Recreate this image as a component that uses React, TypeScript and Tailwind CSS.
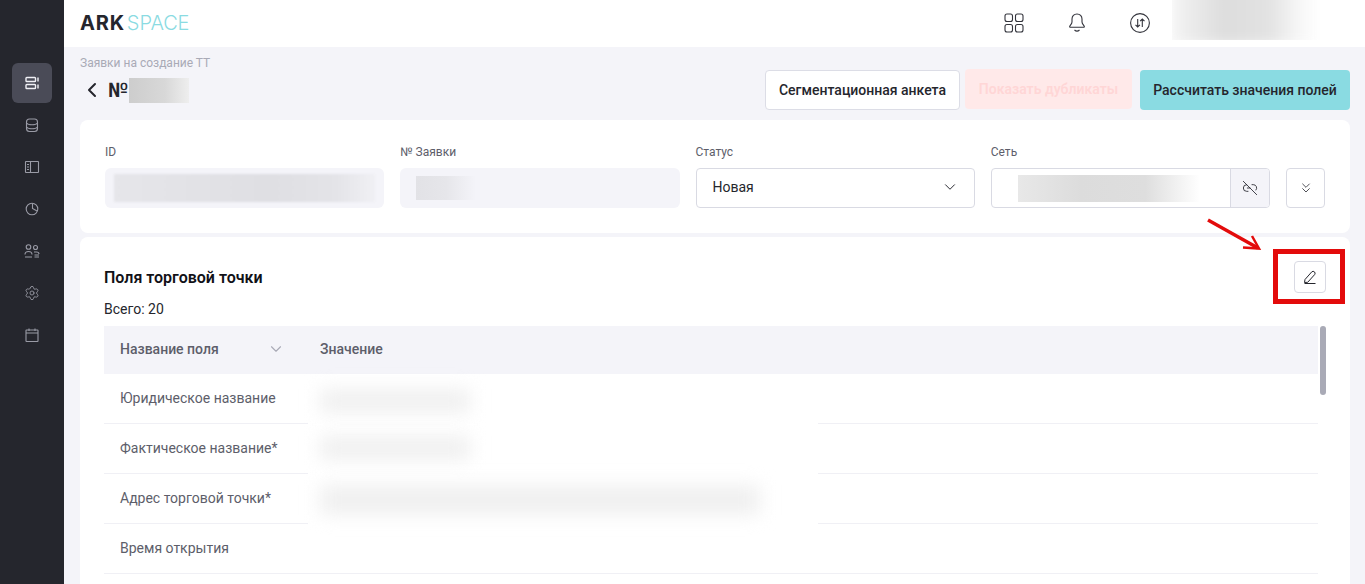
import React from "react";
import { ChevronDown, ChevronLeft, ChevronsDown, Link2Off, Settings } from "lucide-react";

const rows = [
  { name: "Юридическое название" },
  { name: "Фактическое название*" },
  { name: "Адрес торговой точки*" },
  { name: "Время открытия" },
];

function SideIcon({ children, active }: { children: React.ReactNode; active?: boolean }) {
  return (
    <div className={active ? "flex h-10 w-10 items-center justify-center rounded-md bg-[#4a4b57] text-[#f0f0f5]" : "flex h-10 w-10 items-center justify-center rounded-md text-[#9a9ba6]"}>
      <svg width="16" height="16" viewBox="0 0 16 16" fill="none" stroke="currentColor" strokeWidth={active ? 1.4 : 1.1}>
        {children}
      </svg>
    </div>
  );
}

function Sidebar() {
  return (
    <aside className="flex w-16 shrink-0 flex-col items-center gap-[2px] bg-[#25262d] pt-[63px]">
      <SideIcon active>
        <rect x="2" y="2.500" width="9.500" height="4" rx="0.8" />
        <rect x="2" y="9.500" width="9.500" height="4" rx="0.8" />
        <path d="M14 2.500v4M14 9.500v4" />
      </SideIcon>
      <SideIcon>
        <rect x="2.500" y="2" width="11" height="12.500" rx="3" />
        <path d="M2.500 6c1 1.300 3 1.800 5.500 1.800s4.500-.5 5.500-1.800" />
        <path d="M2.500 10c1 1.300 3 1.800 5.500 1.800s4.500-.5 5.500-1.800" />
      </SideIcon>
      <SideIcon>
        <rect x="1.500" y="2.500" width="13" height="11" rx="0.5" />
        <path d="M6.500 2.500v11M3 5.500h2M3 8h2M3 10.500h2" />
      </SideIcon>
      <SideIcon>
        <circle cx="8" cy="8" r="5.800" />
        <path d="M8.500 2.500V7.500L13 10" />
      </SideIcon>
      <SideIcon>
        <circle cx="4.500" cy="4" r="2.300" />
        <circle cx="11.500" cy="4.500" r="2" />
        <path d="M1 11.500c0-2 1.500-3 3.500-3s3.500 1 3.500 3M1 14h7M10 9h2.500c1.500 0 2.500.8 2.500 2M10.500 12h4.500M10.500 14h4.500" />
      </SideIcon>
      <div className="flex h-10 w-10 items-center justify-center text-[#9a9ba6]">
        <Settings size={16} strokeWidth={1.300} />
      </div>
      <SideIcon>
        <rect x="2" y="3" width="12" height="11.500" rx="0.5" />
        <path d="M2 6h12M5 1.500V4M11 1.500V4" />
      </SideIcon>
    </aside>
  );
}

function Header() {
  return (
    <header className="relative flex h-[47px] shrink-0 items-center bg-white pb-[2px] pl-4">
      <div className="flex items-baseline font-['Inter',sans-serif] text-[20px] leading-none">
        <span className="font-bold tracking-[0.8px] text-[#25262d]">ARK</span>
        <span className="ml-[2px] font-light tracking-[-0.1px] text-[#8adbe2]">SPACE</span>
      </div>
      <div className="ml-auto mr-[45px] flex items-center">
        <div className="flex w-[63px] justify-center text-[#33343c]">
          <svg width="20" height="20" viewBox="0 0 20 20" fill="none" stroke="currentColor" strokeWidth="1.100">
            <rect x="1" y="1" width="7.500" height="7.500" rx="2" />
            <rect x="11.500" y="1" width="7.500" height="7.500" rx="2" />
            <rect x="1" y="11.500" width="7.500" height="7.500" rx="2" />
            <rect x="11.500" y="11.500" width="7.500" height="7.500" rx="2" />
          </svg>
        </div>
        <div className="flex w-[63px] justify-center text-[#33343c]">
          <svg width="20" height="20" viewBox="0 0 20 20" fill="none" stroke="currentColor" strokeWidth="1.100">
            <path d="M10 1c-3 0-5 2.300-5 5v3c0 1.500-1.300 2.800-2.200 4 -.4.600 0 1.300.7 1.300h13c.7 0 1.100-.7.700-1.300-.9-1.200-2.200-2.500-2.200-4V6c0-2.700-2-5-5-5z" />
            <path d="M7.500 17c1.500 1.300 3.500 1.300 5 0" />
          </svg>
        </div>
        <div className="flex w-[63px] justify-center text-[#33343c]">
          <svg width="20" height="20" viewBox="0 0 20 20" fill="none" stroke="currentColor" strokeWidth="1.100">
            <circle cx="10" cy="10" r="9.400" />
            <path d="M7.700 6v8M5.500 11.800 7.700 14l2.200-2.200M12.300 14V6M10.100 8.200 12.300 6l2.200 2.200" />
          </svg>
        </div>
        <div className="ml-[1px] h-[40px] w-[148px] -translate-y-[3px] overflow-hidden">
          <div className="-mt-4 h-[60px] w-full bg-[linear-gradient(90deg,#f4f4f4,#dddddd_35%,#e2e2e2_65%,#f6f6f6_85%,#ffffff)] blur-[6px]" />
        </div>
      </div>
    </header>
  );
}

function TitleRow() {
  return (
    <div className="flex h-[73px] shrink-0 pl-4 pr-[15px]">
      <div className="flex flex-col">
        <div className="mt-[9px] text-xs leading-[14px] text-[#a9aab6]">Заявки на создание ТТ</div>
        <div className="mt-[7px] flex items-center text-[#25262d]">
          <ChevronLeft size={24} strokeWidth={2} />
          <span className="ml-1 text-[20px] font-semibold leading-[26px]">№</span>
          <div className="ml-[1px] h-[25px] w-[60px] bg-[linear-gradient(90deg,#cdcdcd,#d8d8d8_60%,#eeeeee)]" />
        </div>
      </div>
      <div className="ml-auto mt-[23px] flex h-10 items-center">
        <button className="h-10 w-[195px] rounded border border-[#dcdde6] bg-white text-sm font-medium text-[#25262d]">Сегментационная анкета</button>
        <button className="ml-[5px] h-10 w-[167px] -translate-y-px rounded bg-[#ffe9e9] text-sm font-semibold text-[#ffd6d6]">Показать дубликаты</button>
        <button className="ml-2 h-10 w-[210px] rounded bg-[#8adbe2] text-sm font-medium text-[#25262d]">Рассчитать значения полей</button>
      </div>
    </div>
  );
}

function Field({ label, children }: { label: string; children: React.ReactNode }) {
  return (
    <div className="min-w-0 flex-1">
      <div className="mb-2 text-xs leading-4 text-[#5d5e6a]">{label}</div>
      {children}
    </div>
  );
}

function InfoCard() {
  return (
    <section className="ml-4 mr-[15px] flex shrink-0 items-end gap-4 rounded-lg bg-white px-[25px] pb-[25px] pt-6">
      <Field label="ID">
        <div className="flex h-10 items-center rounded-md bg-[#f4f4f9] px-[9px]">
          <div className="h-7 w-full bg-[linear-gradient(90deg,#e6e6ea,#dfdfe3_60%,#e4e4e8_85%,#f0f0f4)] blur-[1px]" />
        </div>
      </Field>
      <Field label="№ Заявки">
        <div className="flex h-10 items-center rounded-md bg-[#f4f4f9] px-4">
          <div className="h-6 w-[60px] bg-[linear-gradient(90deg,#e2e2e6,#e6e6ea_50%,#f4f4f9)]" />
        </div>
      </Field>
      <Field label="Статус">
        <div className="flex h-10 items-center justify-between rounded border border-[#d9dae3] bg-white pb-[2px] pl-4 pr-[15px] text-sm text-[#25262d]">
          Новая
          <ChevronDown size={18} strokeWidth={1.300} />
        </div>
      </Field>
      <Field label="Сеть">
        <div className="flex h-10 overflow-hidden rounded border border-[#d9dae3] bg-white">
          <div className="flex flex-1 items-center pl-[26px] pr-[30px]">
            <div className="h-[27px] w-full bg-[linear-gradient(90deg,#e8e8e8,#dcdcdc_35%,#dedede_70%,#ffffff)]" />
          </div>
          <div className="flex w-[39px] items-center justify-center border-l border-[#d9dae3] bg-[#f4f4f9] text-[#25262d]">
            <Link2Off size={16} strokeWidth={1.300} />
          </div>
        </div>
      </Field>
      <button className="flex h-10 w-[39px] items-center justify-center rounded border border-[#d9dae3] bg-white text-[#25262d]">
        <ChevronsDown size={16} strokeWidth={1.200} />
      </button>
    </section>
  );
}

function FieldsCard() {
  return (
    <section className="relative ml-4 mr-[15px] mt-1 min-h-0 flex-1 rounded-t-lg bg-white pl-6 pr-6">
      <div className="flex h-[56px] items-end justify-between">
        <h2 className="pb-[3px] text-base font-semibold leading-6 text-[#111117]">Поля торговой точки</h2>
        <button className="flex h-8 w-8 items-center justify-center rounded border border-[#d9dae3] bg-white text-[#25262d]">
          <svg width="16" height="16" viewBox="0 0 16 16" fill="none" stroke="currentColor" strokeWidth="1">
            <path d="M2.500 13.500 3 10.500 9.800 2.800a2 2 0 0 1 2.900 2.700L5.700 13.300z" />
            <path d="M2.500 14.500h11" />
          </svg>
        </button>
      </div>
      <div className="mt-[6px] text-sm leading-[20px] text-[#25262d]">Всего: 20</div>
      <div className="relative mt-[7px]">
        <div className="mr-[8px]">
          <div className="flex h-12 items-center bg-[#f4f4f9] pb-[2px] text-sm font-medium text-[#5d5e6a]">
            <div className="flex w-[200px] items-center justify-between pl-4 pr-[19px]">
              Название поля
              <ChevronDown size={18} strokeWidth={1.500} className="text-[#a9aab6]" />
            </div>
            <div className="pl-4">Значение</div>
          </div>
          {rows.map((row) => (
            <div key={row.name} className="flex h-[50px] items-center border-b border-[#f0f0f5] pb-[2px] text-sm text-[#5d5e6a]">
              <div className="w-[200px] pl-4">{row.name}</div>
            </div>
          ))}
        </div>
        <div className="absolute right-0 top-0 h-[69px] w-[6px] rounded-[3px] bg-[#a9aab6]" />
        {/* blurred values lie over the rows */}
        <div className="absolute left-[204px] top-[60px] h-[140px] w-[510px] bg-white">
          <div className="ml-3 mt-[3px] h-6 w-[150px] bg-[#f0f0f0] blur-[9px]" />
          <div className="ml-3 mt-[23px] h-6 w-[150px] bg-[#f0f0f0] blur-[9px]" />
          <div className="ml-3 mt-[25px] h-[30px] w-[440px] bg-[#f0f0f0] blur-[9px]" />
        </div>
      </div>
      <div className="absolute right-[5px] top-[12px] h-[55px] w-[72px] border-[5px] border-[#e30b0b]" />
      <svg className="absolute right-[88px] -top-[19px]" width="56" height="34" viewBox="0 0 56 34" fill="none" stroke="#e30b0b">
        <path d="M2 2 52 30" strokeWidth="3.500" />
        <path d="M37 29.500 53 30.500 46 18" strokeWidth="2.500" />
      </svg>
    </section>
  );
}

export default function App() {
  return (
    <div className="flex h-[584px] w-[1365px] overflow-hidden bg-[#f4f4f9] font-['Roboto',sans-serif]">
      <Sidebar />
      <main className="flex min-w-0 flex-1 flex-col">
        <Header />
        <TitleRow />
        <InfoCard />
        <FieldsCard />
      </main>
    </div>
  );
}
